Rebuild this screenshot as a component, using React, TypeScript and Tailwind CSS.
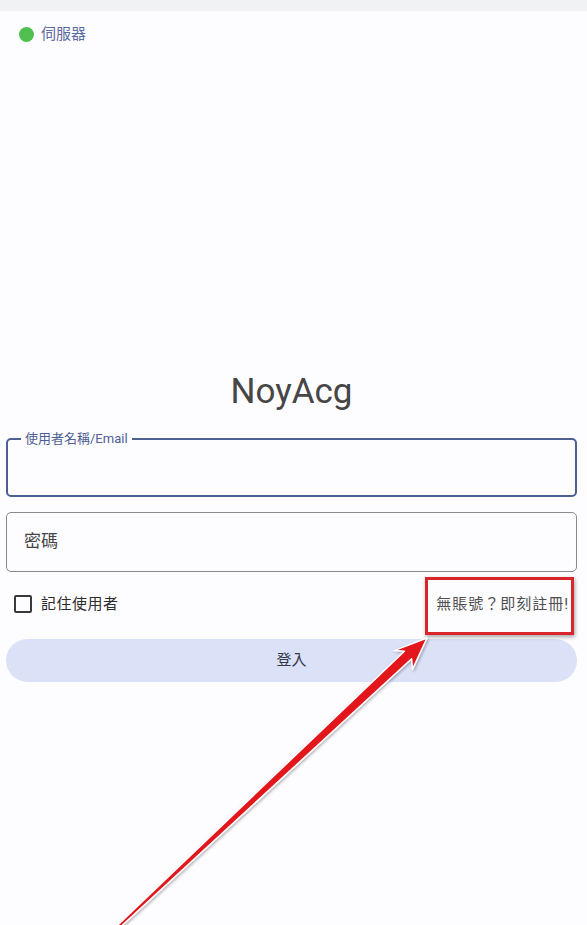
import React from "react";

const font = { fontFamily: 'Roboto, "Noto Sans CJK TC", sans-serif' };

const Arrow = () => (
  <svg className="absolute inset-0 pointer-events-none" width="587" height="925" viewBox="0 0 587 925">
    <defs>
      <filter id="shadow" x="-10%" y="-10%" width="120%" height="120%">
        <feDropShadow dx="1" dy="1" stdDeviation="1.5" floodColor="#000" floodOpacity="0.35" />
      </filter>
    </defs>
    <polygon
      points="108.5,933.9 404.4,651.2 394.7,650.4 427,638 412.5,669.4 411.6,658.8 110.5,936.1"
      fill="#e3161b"
      stroke="#ffffff"
      strokeWidth="1.5"
      strokeLinejoin="round"
      filter="url(#shadow)"
    />
  </svg>
);

export default function App() {
  return (
    <div className="relative w-[587px] h-[925px] overflow-hidden bg-[#fdfcff]" style={font}>
      {/* top strip */}
      <div className="h-[11px] bg-[#f1f2f4]" />

      {/* server status */}
      <div className="flex items-center gap-[7px] pl-[19px] pt-[15px]">
        <span className="w-[15px] h-[15px] rounded-full bg-[#4fbf4f]" />
        <span className="text-[15px] leading-[16px] text-[#5b6aa0]">伺服器</span>
      </div>

      {/* login form */}
      <div className="mt-[330px] pl-[6px] pr-[10px]">
        <h1 className="text-center text-[35px] leading-[40px] text-[#464646]">NoyAcg</h1>

        <div className="relative mt-[26px] h-[59px] rounded-[5px] border-2 border-[#4d6093]">
          <span className="absolute -top-[10px] left-[13px] px-[4px] bg-[#fdfcff] text-[13px] leading-[17px] text-[#4d6093]">
            使用者名稱/Email
          </span>
        </div>

        <div className="mt-[15px] h-[60px] rounded-[5px] border border-[#8a8a8e] flex items-center pl-[17px]">
          <span className="text-[17px] text-[#454545]">密碼</span>
        </div>

        <div className="mt-[13px] h-[38px] flex items-center justify-between">
          <label className="flex items-center gap-[9px] pl-[8px]">
            <span className="w-[18px] h-[18px] rounded-[2px] border-[2.5px] border-[#3a3a3a]" />
            <span className="text-[15px] tracking-[0.5px] text-[#2c2c2c]">記住使用者</span>
          </label>
          <span className="pr-[8px] text-[15px] tracking-[1px] text-[#4e4e4e]">無賬號？即刻註冊!</span>
        </div>

        <button className="mt-[16px] w-full h-[43px] rounded-full bg-[#dbe1f7] text-[15px] text-[#333a4a]">
          登入
        </button>
      </div>

      {/* annotation */}
      <div className="absolute left-[425px] top-[577px] w-[149px] h-[58px] border-[3px] border-[#d8262a] shadow-[1px_2px_4px_rgba(0,0,0,0.35)]" />
      <Arrow />
    </div>
  );
}
